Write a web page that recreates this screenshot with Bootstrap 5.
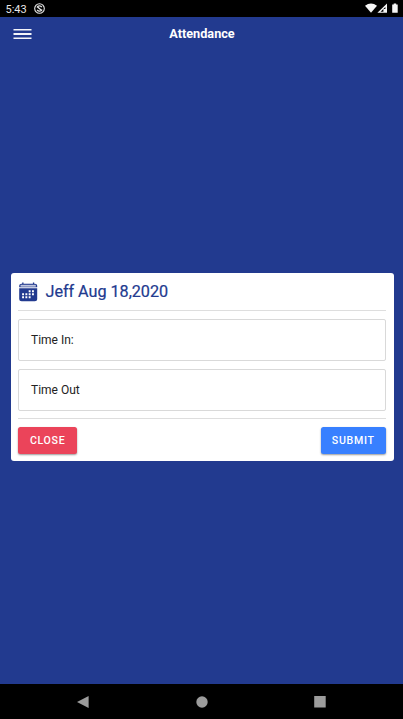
<!DOCTYPE html>
<html lang="en">
<head>
<meta charset="utf-8">
<meta name="viewport" content="width=device-width, initial-scale=1">
<title>Attendance</title>
<link href="https://cdn.jsdelivr.net/npm/bootstrap@5.3.0/dist/css/bootstrap.min.css" rel="stylesheet">
<style>
body{font-family:Roboto,"Liberation Sans",sans-serif;background:#223a8f;height:100vh;overflow:hidden}
svg{display:block;flex:none}
.status-bar{height:17px;background:#000;color:#e8e8e8;font-size:11px;line-height:17px;padding:0 4px 0 5.5px}
.status-bar .clock{width:28.5px;padding-top:1px}
.app-bar{height:34px;display:grid;grid-template-columns:50px 1fr 50px}
.app-bar h1{font-size:12.7px;font-weight:700;line-height:34px;margin:0;padding-left:1px}
.app-bar .btn{padding:0 0 0 13px;border:0}
.attendance{margin:222px 9.5px 0 10.7px;height:188px;padding:0 7.8px;border:0;border-radius:3px}
.heading{height:38px;gap:7px;border-bottom:1px solid #dedede;color:#223a8f}
.heading h2{font-size:16.2px;font-weight:400;-webkit-text-stroke:.2px;letter-spacing:-.03px;line-height:20px;margin:0}
.field{height:42px;border:1px solid #d9d9d9;border-radius:2px;font-size:12px;color:#222;padding-left:11.5px}
.field-in{margin-top:8px}
.field-out{margin-top:8px}
.actions{margin-top:7px;border-top:1px solid #dedede;padding-top:8px}
.act{height:27px;padding:0;border:0;border-radius:2.5px;font-size:10.6px;font-weight:500;line-height:27px;letter-spacing:.7px;color:#fff;box-shadow:0 1px 2px #0006}
.act-close{width:58.3px;background:#eb445a}
.act-submit{width:65px;background:#3880ff}
.system-nav{height:35px;background:#000;padding:0 77px}
</style>
<script src="https://cdn.jsdelivr.net/npm/bootstrap@5.3.0/dist/js/bootstrap.bundle.min.js"></script>
</head>
<body class="d-flex flex-column">
<div class="status-bar d-flex align-items-center">
  <span class="clock">5:43</span>
  <svg width="11" height="11" viewBox="0 0 11 11" fill="none" stroke="#e8e8e8"><circle cx="5.5" cy="5.5" r="4.8" stroke-width="1.1"/><path d="M7.8 4.2A2.7 2.7 0 0 0 3 4.5M3.2 6.8A2.7 2.7 0 0 0 8 6.5M3 3.5l5 4.3" stroke-width="1.3"/></svg>
  <div class="ms-auto d-flex">
    <svg width="34" height="11" viewBox="0 0 34 11" fill="#f5f5f5"><path d="M0 2.7Q6-1.8 12 2.7L6 9.8z"/><path fill-rule="evenodd" d="M22 .5v9.3h-9.6zM20.4 4L15.5 8.8h2.9V6h2z"/><path d="M27.2 1.5h1.5V.5h2.5v1h1.5v8.3h-5.5z"/></svg>
  </div>
</div>
<header class="app-bar text-white">
  <button class="btn" type="button" aria-label="Menu"><svg width="19" height="12" viewBox="0 0 19 12" fill="#f4f5fa"><path d="M.5 1h18v1.6H.5zM.5 5h18v1.9H.5zM.5 9.4h18v1.6H.5z"/></svg></button>
  <h1 class="text-center">Attendance</h1>
</header>
<main class="flex-grow-1">
  <section class="card attendance">
    <div class="heading d-flex align-items-center">
      <svg width="20" height="20" viewBox="0 0 20 20"><path d="M1.2 6.2h18v10.5q0 2.5-2.5 2.5H3.7q-2.5 0-2.5-2.5z" fill="#223a8f"/><path d="M1.2 5.2V3.8q0-2.1 2.3-2.1H4.2V.5h1.3v1.2h9.4V.5h1.3v1.2h.7q2.3 0 2.3 2.1v1.4z" fill="#223a8f"/><path d="M2.5 2.8h15.3v1.9H2.5z" fill="#fff" opacity=".7"/><path d="M10.7 9.2h5.8M4.1 12.2h12.4M4.1 15.3h9.1" stroke="#fff" stroke-width="1.9" stroke-dasharray="1.9 1.4"/></svg>
      <h2>Jeff Aug 18,2020</h2>
    </div>
    <div class="field field-in d-flex align-items-center">Time In:</div>
    <div class="field field-out d-flex align-items-center">Time Out</div>
    <div class="actions d-flex justify-content-between">
      <button type="button" class="btn act act-close">CLOSE</button>
      <button type="button" class="btn act act-submit">SUBMIT</button>
    </div>
  </section>
</main>
<nav class="system-nav d-flex justify-content-between align-items-center" aria-label="System">
  <svg width="12" height="12" viewBox="0 0 12 12" fill="#9c9c9c"><path d="M11.6 0v12L0 6z"/></svg>
  <svg width="12" height="12" viewBox="0 0 12 12" fill="#9c9c9c"><circle cx="6" cy="6" r="5.7"/></svg>
  <svg width="12" height="12" viewBox="0 0 12 12" fill="#9c9c9c"><path d="M.2 0h11.5v11.5H.2z"/></svg>
</nav>
</body>
</html>
